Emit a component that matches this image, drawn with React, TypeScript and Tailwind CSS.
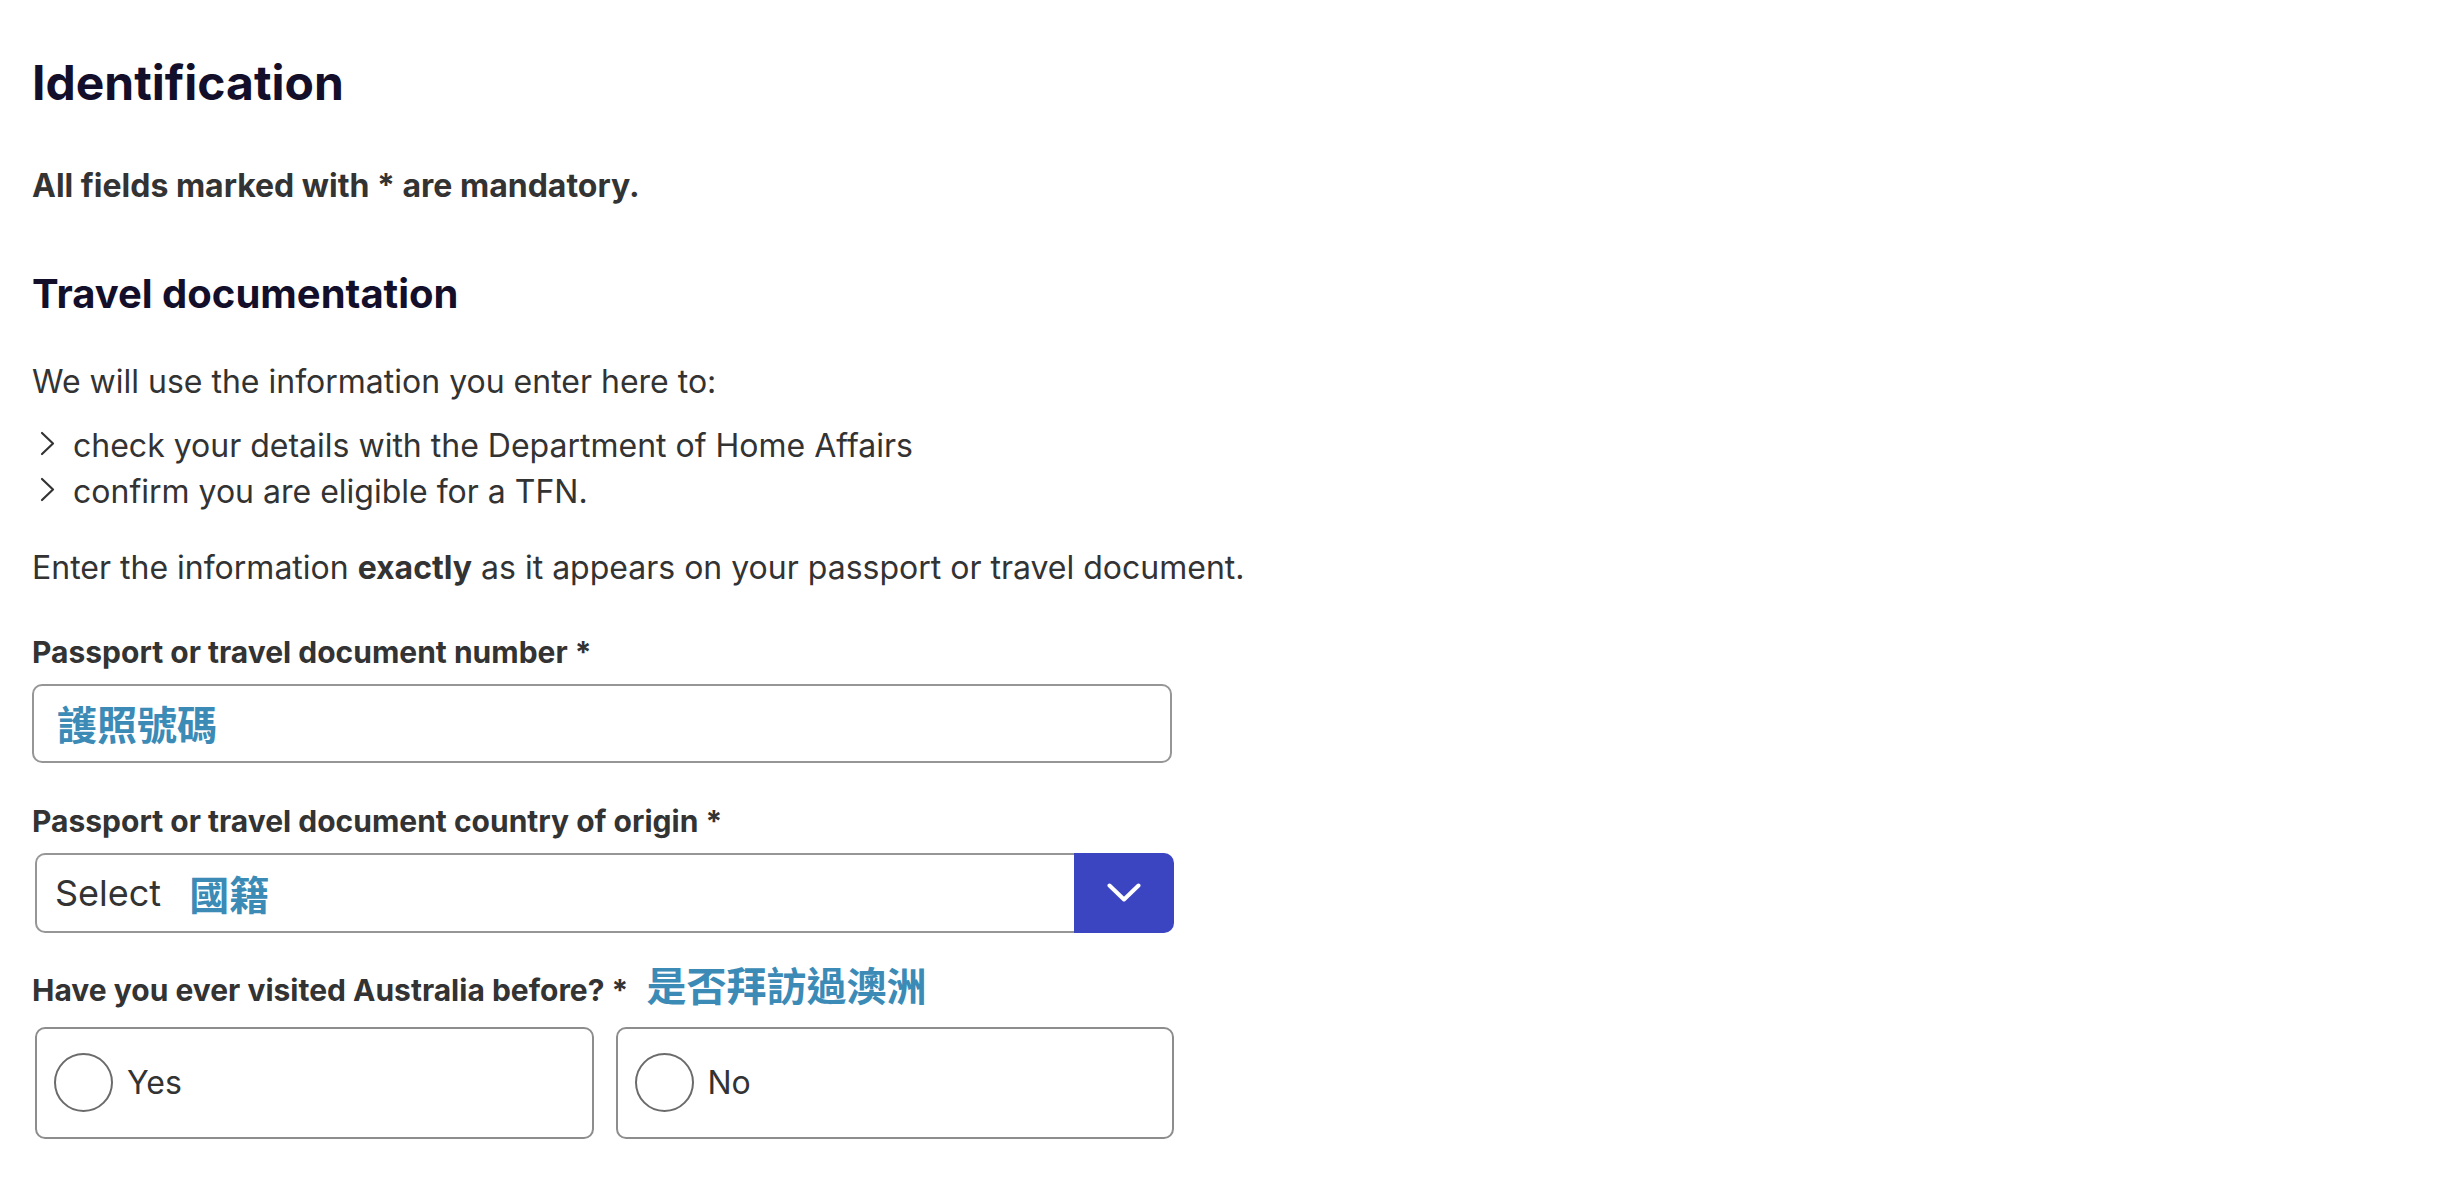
import React from "react";

// Chevron used as bullet marker in the info list
const BulletChevron = () => (
  <svg width="15" height="25" viewBox="0 0 15 25" fill="none" className="mt-[8px] shrink-0">
    <polyline points="2,2 13,12.5 2,23" stroke="#333333" strokeWidth="2.2" strokeLinecap="round" strokeLinejoin="round" />
  </svg>
);

const DownChevron = () => (
  <svg width="34" height="20" viewBox="0 0 34 20" fill="none">
    <polyline points="2.5,2.5 17,16.5 31.5,2.5" stroke="#ffffff" strokeWidth="4" strokeLinecap="round" strokeLinejoin="round" />
  </svg>
);

const cjk = "font-['Noto_Sans_CJK_TC','Noto_Sans_CJK_SC',sans-serif] font-bold text-[#3b8bb6]";

const RadioOption = ({ label }: { label: string }) => (
  <label className="flex h-[112px] items-center rounded-[10px] border-2 border-[#8d8d8d] pl-[17px] cursor-pointer">
    <span className="h-[59px] w-[59px] shrink-0 rounded-full border-2 border-[#6b6b6b] bg-white" />
    <span className="ml-[14px] text-[32px] leading-[36px]">{label}</span>
  </label>
);

export default function App() {
  return (
    <div className="min-h-screen bg-white pl-[32px] pt-[54px] font-['Inter','Liberation_Sans',sans-serif] text-[#333333]">
      <h1 className="text-[48px] leading-[1.2] font-bold text-[#130f2a]">Identification</h1>

      <p className="mt-[56px] text-[32px] leading-[36px] font-bold">All fields marked with * are mandatory.</p>

      <h2 className="mt-[66px] text-[40px] leading-[1.2] font-bold text-[#130f2a]">Travel documentation</h2>

      <p className="mt-[46px] text-[32px] leading-[36px]">We will use the information you enter here to:</p>

      <ul className="mt-[23px] text-[32px] leading-[46px]">
        <li className="flex pl-[8px]">
          <BulletChevron />
          <span className="ml-[18px]">check your details with the Department of Home Affairs</span>
        </li>
        <li className="flex pl-[8px]">
          <BulletChevron />
          <span className="ml-[18px]">confirm you are eligible for a TFN.</span>
        </li>
      </ul>

      <p className="mt-[35px] text-[32px] leading-[36px]">
        Enter the information <strong className="font-bold">exactly</strong> as it appears on your passport or travel document.
      </p>

      {/* Passport number */}
      <label className="mt-[48px] block text-[30px] leading-[36px] font-bold">
        Passport or travel document number *
      </label>
      <div className="mt-[14px] flex h-[79px] w-[1140px] items-center rounded-[10px] border-2 border-[#969696] pl-[23px]">
        <span className={`${cjk} text-[40px] leading-none`}>護照號碼</span>
      </div>

      {/* Country of origin */}
      <label className="mt-[40px] block text-[30px] leading-[36px] font-bold">
        Passport or travel document country of origin *
      </label>
      <div className="mt-[14px] ml-[3px] flex h-[80px] w-[1139px]">
        <div className="flex flex-1 items-center rounded-l-[10px] border-2 border-r-0 border-[#969696] pl-[18px]">
          <span className="text-[36px] leading-none">Select</span>
          <span className={`${cjk} ml-[28px] text-[40px] leading-none`}>國籍</span>
        </div>
        <div className="flex w-[100px] items-center justify-center rounded-r-[10px] bg-[#3c45c1]">
          <DownChevron />
        </div>
      </div>

      {/* Visited before */}
      <div className="mt-[39px] h-[36px] text-[30px] leading-[36px] font-bold">
        Have you ever visited Australia before? *
        <span className={`${cjk} ml-[18px] text-[40px] leading-[0]`}>是否拜訪過澳洲</span>
      </div>
      <div className="mt-[19px] ml-[3px] grid w-[1139px] grid-cols-2 gap-[22px]">
        <RadioOption label="Yes" />
        <RadioOption label="No" />
      </div>
    </div>
  );
}
